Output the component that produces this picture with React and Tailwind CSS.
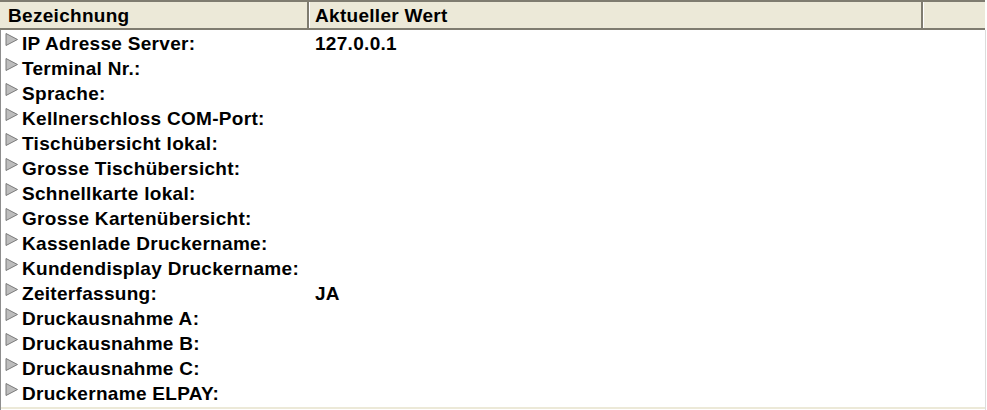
const rows = [
  ["IP Adresse Server:", "127.0.0.1"],
  ["Terminal Nr.:", ""],
  ["Sprache:", ""],
  ["Kellnerschloss COM-Port:", ""],
  ["Tischübersicht lokal:", ""],
  ["Grosse Tischübersicht:", ""],
  ["Schnellkarte lokal:", ""],
  ["Grosse Kartenübersicht:", ""],
  ["Kassenlade Druckername:", ""],
  ["Kundendisplay Druckername:", ""],
  ["Zeiterfassung:", "JA"],
  ["Druckausnahme A:", ""],
  ["Druckausnahme B:", ""],
  ["Druckausnahme C:", ""],
  ["Druckername ELPAY:", ""],
];

const Arrow = () => (
  <svg width="13" height="13" viewBox="0 0 13 13" className="shrink-0 mt-[1px]">
    <path d="M1 0.5 L12.5 6.5 L1 12.5 Z" fill="#bdbdbd" stroke="#7a7a7a" strokeWidth="1" />
  </svg>
);

export default function App() {
  return (
    <div
      className="w-[987px] h-[410px] bg-white flex flex-col overflow-hidden font-bold text-black text-[19px] tracking-[0.3px]"
      style={{ fontFamily: '"Liberation Sans", Arial, sans-serif' }}
    >
      {/* header */}
      <div className="flex w-[985px] h-[30px] shrink-0 bg-[#ece9d8] border-t-2 border-b-2 border-[#7f7c70]">
        <div className="w-[309px] h-full flex items-center pl-[8px] border-r-2 border-[#7f7c70]">
          <span className="leading-none">Bezeichnung</span>
        </div>
        <div className="w-[614px] h-full flex items-center pl-[5px] border-l border-r-2 border-l-white border-r-[#7f7c70]">
          <span className="leading-none">Aktueller Wert</span>
        </div>
        <div className="flex-1 h-full border-l border-white" />
      </div>

      {/* body */}
      <div className="flex-1 w-[986px] flex flex-col border-l border-r border-l-[#8e8e8e] border-r-[#dcdcdc] pt-[2px]">
        {rows.map(([label, value]) => (
          <div key={label} className="flex h-[25px] items-start">
            <div className="w-[308px] flex items-start pl-[4px] gap-[4px]">
              <Arrow />
              <span className="leading-[25px] -mt-[1px] whitespace-nowrap">{label}</span>
            </div>
            <div className="pl-[6px] leading-[25px] -mt-[1px] whitespace-nowrap">{value}</div>
          </div>
        ))}
        <div className="flex-1" />
        <div className="h-[2px] bg-[#ece9d8] mb-[1px]" />
      </div>
    </div>
  );
}
